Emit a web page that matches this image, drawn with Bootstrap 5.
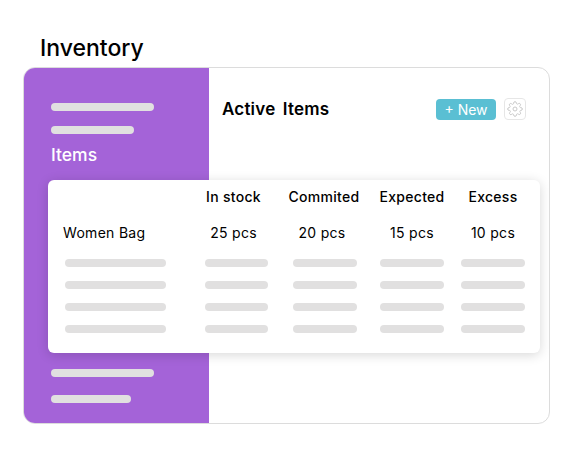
<!DOCTYPE html>
<html lang="en">
<head>
    <meta charset="UTF-8">
    <meta name="viewport" content="width=device-width, initial-scale=1.0">
    <title>Inventory</title>

    <!-- Bootstrap CSS -->
    <link href="https://cdn.jsdelivr.net/npm/bootstrap@5.3.0/dist/css/bootstrap.min.css" rel="stylesheet">

    <style>
        body {
            background-color: #fff;
            color: #000;
            font-family: "Inter", "Liberation Sans", sans-serif;
            padding: 33px 23px 0 23px;
        }
        .page-title {
            font-size: 23px;
            font-weight: 500;
            line-height: 30px;
            margin: 0 0 4px 17px;
        }
        .frame {
            width: 527px;
            height: 357px;
            border: 1px solid #dcdcdc;
            border-radius: 12px;
            overflow: hidden;
            position: relative;
        }
        .side {
            width: 185px;
            background-color: #a463d8;
            padding: 35px 0 0 27px;
        }
        .side-label {
            color: #fff;
            font-size: 17.5px;
            font-weight: 500;
            line-height: 24px;
            margin: 9px 0 0 0;
        }
        .line {
            height: 8px;
            border-radius: 4px;
            background-color: #e1e0e0;
        }
        .w-103 { width: 103px; }
        .w-83 { width: 83px; }
        .w-80 { width: 80px; }
        .gap-15 { margin-bottom: 15px; }
        .gap-18 { margin-bottom: 18px; }
        .side-foot {
            margin-top: 202px;
        }
        .main-head {
            padding: 30px 23px 0 13px;
        }
        .main-title {
            font-size: 17px;
            font-weight: 600;
            line-height: 22px;
            letter-spacing: .2px;
            margin: 0;
            word-spacing: 3px;
        }
        .new-btn {
            background-color: #5abfd3;
            color: #fff;
            font-size: 14px;
            line-height: 21px;
            padding: 0;
            width: 60px;
            border: 0;
            border-radius: 4px;
        }
        .gear-btn {
            width: 22px;
            height: 22px;
            border: 1px solid #e6e6e6;
            border-radius: 4px;
        }
        .float-card {
            position: absolute;
            left: 24px;
            top: 112px;
            width: 492px;
            height: 173px;
            background-color: #fff;
            border-radius: 6px;
            box-shadow: 0 2px 12px rgba(0, 0, 0, 0.16);
            padding: 7px 15px 0 17px;
        }
        .stock-row {
            display: grid;
            grid-template-columns: 127px 87px 94px 82px 80px;
            margin-left: -2px;
            font-size: 14px;
            line-height: 20px;
            letter-spacing: .3px;
            white-space: nowrap;
        }
        .stock-row > div {
            text-align: center;
        }
        .stock-row > .name-cell {
            text-align: left;
        }
        .stock-row > .nudge-left {
            padding-right: 4px;
        }
        .stock-head {
            font-weight: 500;
            margin-bottom: 16px;
        }
        .bar-track {
            display: flex;
            flex-direction: column;
            gap: 14px;
            margin-top: 16px;
        }
        .bar-row {
            display: flex;
        }
        .bar-name { width: 101px; margin-right: 39px; }
        .bar-stock { width: 63px; margin-right: 25px; }
        .bar-com { width: 64px; margin-right: 23px; }
        .bar-exp { width: 64px; margin-right: 17px; }
        .bar-exc { width: 64px; }
    </style>
</head>
<body>

<h1 class="page-title">Inventory</h1>

<div class="frame d-flex">
    <!-- Sidebar -->
    <div class="side flex-shrink-0">
        <div class="line w-103 gap-15"></div>
        <div class="line w-83"></div>
        <p class="side-label">Items</p>
        <div class="side-foot">
            <div class="line w-103 gap-18"></div>
            <div class="line w-80"></div>
        </div>
    </div>

    <!-- Main -->
    <div class="flex-grow-1">
        <div class="main-head d-flex align-items-center justify-content-between">
            <h2 class="main-title">Active Items</h2>
            <div class="d-flex align-items-center gap-2">
                <button type="button" class="btn new-btn">+ New</button>
                <div class="gear-btn d-flex align-items-center justify-content-center">
                    <svg width="16" height="16" viewBox="0 0 24 24" fill="none" stroke="#c9c9c9" stroke-width="1.5" stroke-linejoin="round">
                        <circle cx="12" cy="12" r="3"/>
                        <path d="M19.4 15a1.65 1.65 0 0 0 .33 1.82l.06.06a2 2 0 1 1-2.83 2.83l-.06-.06a1.65 1.65 0 0 0-2.82 1.17V21a2 2 0 1 1-4 0v-.09a1.65 1.65 0 0 0-2.82-1.12l-.06.06a2 2 0 1 1-2.83-2.83l.06-.06A1.65 1.65 0 0 0 3.26 14H3a2 2 0 1 1 0-4h.09a1.65 1.65 0 0 0 1.12-2.82l-.06-.06a2 2 0 1 1 2.83-2.83l.06.06A1.65 1.65 0 0 0 10 3.26V3a2 2 0 1 1 4 0v.09a1.65 1.65 0 0 0 2.82 1.12l.06-.06a2 2 0 1 1 2.83 2.83l-.06.06A1.65 1.65 0 0 0 20.74 10H21a2 2 0 1 1 0 4h-.09a1.65 1.65 0 0 0-1.51 1z"/>
                    </svg>
                </div>
            </div>
        </div>
    </div>

    <!-- Floating table card -->
    <div class="float-card">
        <div class="stock-row stock-head">
            <div class="name-cell"></div>
            <div>In stock</div>
            <div>Commited</div>
            <div>Expected</div>
            <div>Excess</div>
        </div>
        <div class="stock-row">
            <div class="name-cell">Women Bag</div>
            <div>25 pcs</div>
            <div class="nudge-left">20 pcs</div>
            <div>15 pcs</div>
            <div>10 pcs</div>
        </div>
        <div class="bar-track">
            <div class="bar-row">
                <div class="line bar-name"></div><div class="line bar-stock"></div><div class="line bar-com"></div><div class="line bar-exp"></div><div class="line bar-exc"></div>
            </div>
            <div class="bar-row">
                <div class="line bar-name"></div><div class="line bar-stock"></div><div class="line bar-com"></div><div class="line bar-exp"></div><div class="line bar-exc"></div>
            </div>
            <div class="bar-row">
                <div class="line bar-name"></div><div class="line bar-stock"></div><div class="line bar-com"></div><div class="line bar-exp"></div><div class="line bar-exc"></div>
            </div>
            <div class="bar-row">
                <div class="line bar-name"></div><div class="line bar-stock"></div><div class="line bar-com"></div><div class="line bar-exp"></div><div class="line bar-exc"></div>
            </div>
        </div>
    </div>
</div>

<!-- Bootstrap JS -->
<script src="https://cdn.jsdelivr.net/npm/bootstrap@5.3.0/dist/js/bootstrap.bundle.min.js"></script>

</body>
</html>
